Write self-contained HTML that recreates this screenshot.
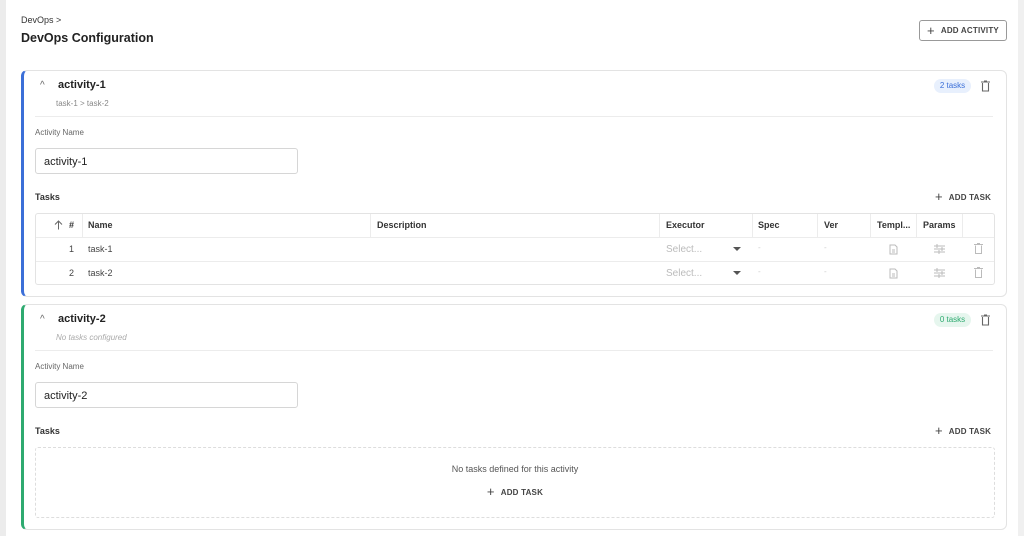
<!DOCTYPE html>
<html><head><style>
*{box-sizing:border-box;margin:0;padding:0}
body{width:1024px;height:536px;background:#fff;font-family:"Liberation Sans",sans-serif;color:#222;position:relative;overflow:hidden}
.a{position:absolute;white-space:nowrap}
.card{position:absolute;left:21px;width:986px;border:1px solid #e3e3e3;border-radius:6px;background:#fff}
.hl{position:absolute;height:1px;background:#ececec}
.vl{position:absolute;width:1px;background:#ececec}
.inp{position:absolute;left:35px;width:263px;height:26px;border:1px solid #d6d6d6;border-radius:3px;font-size:11px;padding:7px 8px;color:#222}
.th{font-size:9px;font-weight:bold;color:#333}
.sm{font-size:8px;color:#666}
.btn{font-size:8px;font-weight:bold;color:#444;letter-spacing:.2px;display:flex;align-items:center}
.btn b{font-size:13px;font-weight:normal;margin-right:6px;line-height:10px}
</style></head><body>
<div class="a" style="left:0;top:0;width:6px;height:536px;background:#ececec"></div>
<div class="a" style="left:1018px;top:0;width:6px;height:536px;background:#f0f0f0"></div>
<div class="a" style="left:21px;top:15px;font-size:9px;color:#333">DevOps &gt;</div>
<div class="a" style="left:21px;top:31px;font-size:12.5px;font-weight:bold;color:#222">DevOps Configuration</div>
<div class="a btn" style="left:919px;top:20px;width:88px;height:21px;border:1px solid #999;border-radius:3px;justify-content:center"><b>+</b>ADD ACTIVITY</div>

<div class="card" style="top:70px;height:227px;border-left:3px solid #3b6fd8"></div>
<div class="a" style="left:40px;top:80px;font-size:10px;color:#666">^</div>
<div class="a" style="left:58px;top:79px;font-size:11px;font-weight:bold">activity-1</div>
<div class="a" style="left:56px;top:99px;font-size:8px;color:#888">task-1 &gt; task-2</div>
<div class="a" style="left:934px;top:79px;width:37px;height:14px;border-radius:7px;background:#e8f0fd;color:#3b6fd8;font-size:8px;text-align:center;padding-top:2px">2 tasks</div>
<svg class="a" style="left:980px;top:80px" width="11" height="12" viewBox="0 0 11 12"><path d="M1 2h9M4 1h3M2.5 3v8h6V3" fill="none" stroke="#666" stroke-width="1.1"/></svg>
<div class="hl" style="left:35px;top:116px;width:958px"></div>
<div class="a sm" style="left:35px;top:128px">Activity Name</div>
<div class="inp" style="top:148px">activity-1</div>
<div class="a th" style="left:35px;top:192px">Tasks</div>
<div class="a btn" style="left:935px;top:192px"><b>+</b>ADD TASK</div>
<div class="a" style="left:35px;top:213px;width:960px;height:72px;border:1px solid #e3e3e3;border-radius:3px"></div>
<div class="hl" style="left:36px;top:237px;width:958px"></div>
<div class="hl" style="left:36px;top:261px;width:958px"></div>
<div class="vl" style="left:82px;top:214px;height:23px"></div>
<div class="vl" style="left:370px;top:214px;height:23px"></div>
<div class="vl" style="left:659px;top:214px;height:23px"></div>
<div class="vl" style="left:752px;top:214px;height:23px"></div>
<div class="vl" style="left:817px;top:214px;height:23px"></div>
<div class="vl" style="left:870px;top:214px;height:23px"></div>
<div class="vl" style="left:916px;top:214px;height:23px"></div>
<div class="vl" style="left:962px;top:214px;height:23px"></div>
<svg class="a" style="left:54px;top:220px" width="9" height="10"><path d="M4.5 9.5V1M1 4.5l3.5-3.5 3.5 3.5" fill="none" stroke="#666"/></svg>
<div class="a th" style="left:69px;top:220px">#</div>
<div class="a th" style="left:88px;top:220px">Name</div>
<div class="a th" style="left:377px;top:220px">Description</div>
<div class="a th" style="left:666px;top:220px">Executor</div>
<div class="a th" style="left:758px;top:220px">Spec</div>
<div class="a th" style="left:824px;top:220px">Ver</div>
<div class="a th" style="left:877px;top:220px">Templ...</div>
<div class="a th" style="left:923px;top:220px">Params</div>
<div class="a" style="left:69px;top:244px;font-size:9px;color:#444">1</div>
<div class="a" style="left:88px;top:244px;font-size:9px;color:#444">task-1</div>
<div class="a" style="left:69px;top:268px;font-size:9px;color:#444">2</div>
<div class="a" style="left:88px;top:268px;font-size:9px;color:#444">task-2</div>
<div class="a" style="left:666px;top:244px;font-size:10px;color:#bbb">Select...</div>
<div class="a" style="left:666px;top:268px;font-size:10px;color:#bbb">Select...</div>
<svg class="a" style="left:733px;top:247px" width="8" height="5"><path d="M0 0h8L4 4z" fill="#555"/></svg>
<svg class="a" style="left:733px;top:271px" width="8" height="5"><path d="M0 0h8L4 4z" fill="#555"/></svg>
<div class="a" style="left:758px;top:243px;font-size:8px;color:#ccc">-</div>
<div class="a" style="left:824px;top:243px;font-size:8px;color:#ccc">-</div>
<div class="a" style="left:758px;top:267px;font-size:8px;color:#ccc">-</div>
<div class="a" style="left:824px;top:267px;font-size:8px;color:#ccc">-</div>
<svg class="a" style="left:889px;top:244px" width="9" height="11"><path d="M1 1h5l2 2v7H1z M3 6h3M3 8h3" fill="none" stroke="#bbb"/></svg>
<svg class="a" style="left:889px;top:268px" width="9" height="11"><path d="M1 1h5l2 2v7H1z M3 6h3M3 8h3" fill="none" stroke="#bbb"/></svg>
<svg class="a" style="left:934px;top:244px" width="11" height="10"><path d="M0 2h11M0 5h11M0 8h11M3 0v4M8 3v4M5 6v4" fill="none" stroke="#bbb"/></svg>
<svg class="a" style="left:934px;top:268px" width="11" height="10"><path d="M0 2h11M0 5h11M0 8h11M3 0v4M8 3v4M5 6v4" fill="none" stroke="#bbb"/></svg>
<svg class="a" style="left:974px;top:243px" width="9" height="11"><path d="M0 1.5h9M3 .5h3M1.5 2.5v8h6v-8" fill="none" stroke="#bbb"/></svg>
<svg class="a" style="left:974px;top:267px" width="9" height="11"><path d="M0 1.5h9M3 .5h3M1.5 2.5v8h6v-8" fill="none" stroke="#bbb"/></svg>

<div class="card" style="top:304px;height:226px;border-left:3px solid #2eaa70"></div>
<div class="a" style="left:40px;top:314px;font-size:10px;color:#666">^</div>
<div class="a" style="left:58px;top:313px;font-size:11px;font-weight:bold">activity-2</div>
<div class="a" style="left:56px;top:333px;font-size:8px;color:#aaa;font-style:italic">No tasks configured</div>
<div class="a" style="left:934px;top:313px;width:37px;height:14px;border-radius:7px;background:#e6f6ee;color:#2eaa70;font-size:8px;text-align:center;padding-top:2px">0 tasks</div>
<svg class="a" style="left:980px;top:314px" width="11" height="12" viewBox="0 0 11 12"><path d="M1 2h9M4 1h3M2.5 3v8h6V3" fill="none" stroke="#666" stroke-width="1.1"/></svg>
<div class="hl" style="left:35px;top:350px;width:958px"></div>
<div class="a sm" style="left:35px;top:362px">Activity Name</div>
<div class="inp" style="top:382px">activity-2</div>
<div class="a th" style="left:35px;top:426px">Tasks</div>
<div class="a btn" style="left:935px;top:426px"><b>+</b>ADD TASK</div>
<div class="a" style="left:35px;top:447px;width:960px;height:71px;border:1px dashed #ddd;border-radius:3px"></div>
<div class="a" style="left:35px;top:464px;width:960px;text-align:center;font-size:9px;color:#555">No tasks defined for this activity</div>
<div class="a btn" style="left:35px;top:487px;width:960px;justify-content:center"><b>+</b>ADD TASK</div>
</body></html>
